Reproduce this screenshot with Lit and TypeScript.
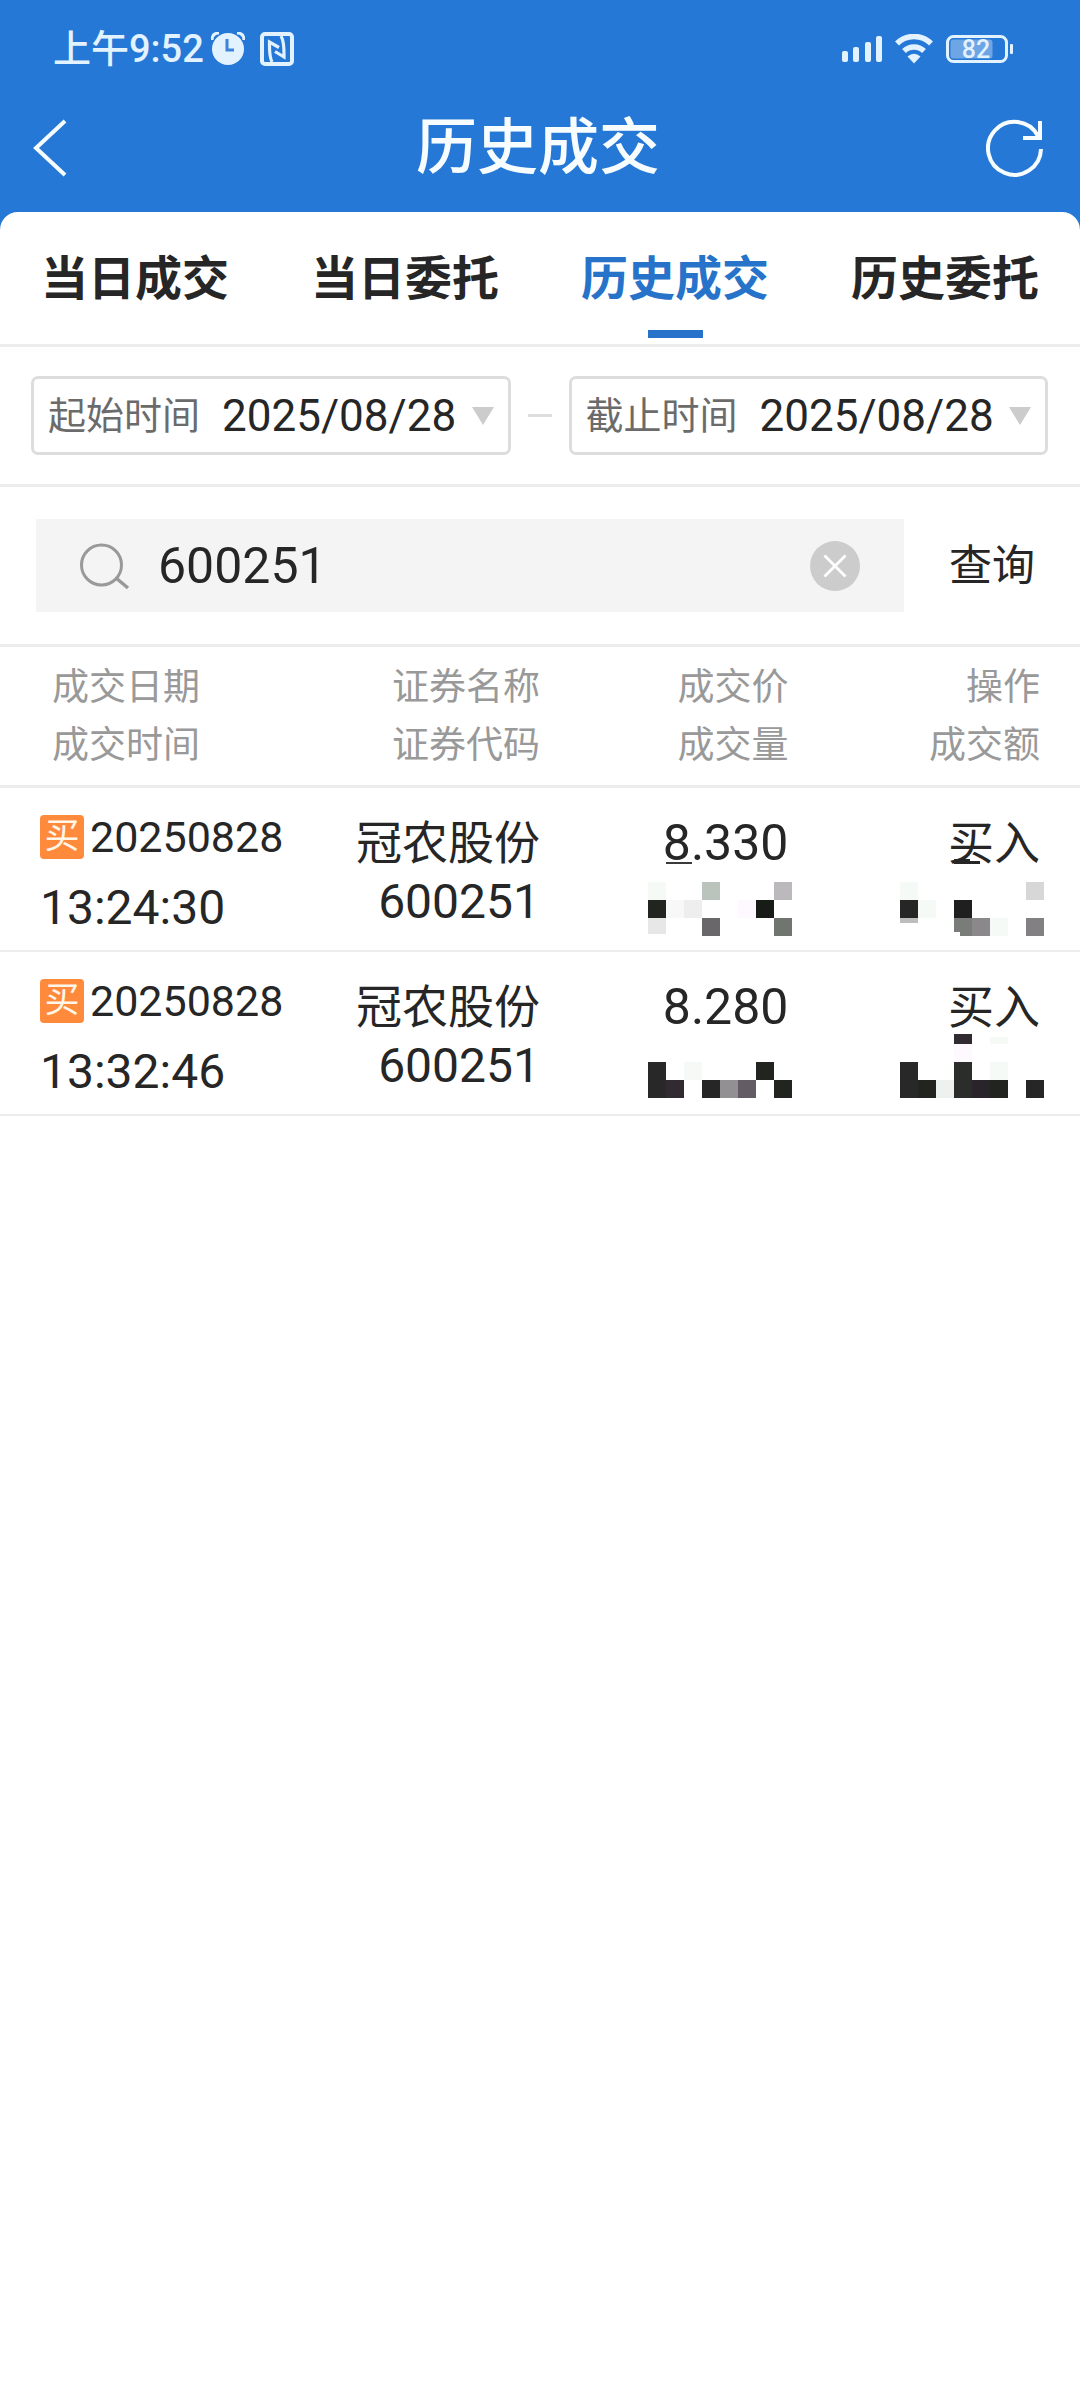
import { LitElement, html, css, svg } from "lit";
import { customElement, property, state } from "lit/decorators.js";
import { classMap } from "lit/directives/class-map.js";

/** One filled block of a masked value: x, y, width, height, colour. */
type Block = [number, number, number, number, string];

interface Trade {
  date: string;
  time: string;
  name: string;
  code: string;
  price: string;
  side: string;
  volumeMask: Block[];
  amountMask: Block[];
}

const TABS = ["当日成交", "当日委托", "历史成交", "历史委托"];

const HEADINGS: [string, string][] = [
  ["成交日期", "成交时间"],
  ["证券名称", "证券代码"],
  ["成交价", "成交量"],
  ["操作", "成交额"],
];

const TRADES: Trade[] = [
  {
    date: "20250828",
    time: "13:24:30",
    name: "冠农股份",
    code: "600251",
    price: "8.330",
    side: "买入",
    volumeMask: [
      [18, 6, 26, 2, "#3a3a3a"],
      [0, 26, 18, 18, "#f5faf7"],
      [54, 26, 18, 18, "#bbc4bc"],
      [126, 26, 18, 18, "#bcb9bd"],
      [0, 44, 18, 18, "#22251f"],
      [18, 44, 18, 18, "#f8f8f8"],
      [36, 44, 18, 18, "#eeeeee"],
      [90, 44, 18, 18, "#fdf9fe"],
      [108, 44, 18, 18, "#171c17"],
      [0, 62, 18, 16, "#e7e7e7"],
      [54, 62, 18, 18, "#69676a"],
      [126, 62, 18, 18, "#717570"],
    ],
    amountMask: [
      [54, 3, 16, 5, "#262626"],
      [70, 5, 10, 3, "#262626"],
      [0, 26, 18, 18, "#f5faf7"],
      [126, 26, 18, 18, "#d7d7d7"],
      [0, 44, 18, 18, "#262626"],
      [18, 44, 18, 18, "#f5faf7"],
      [54, 44, 18, 18, "#1f1f1f"],
      [0, 62, 18, 5, "#bdbdbd"],
      [54, 62, 18, 14, "#797c78"],
      [60, 76, 12, 4, "#797c78"],
      [72, 62, 18, 18, "#8b888c"],
      [90, 62, 18, 18, "#f5faf7"],
      [126, 62, 18, 18, "#838083"],
    ],
  },
  {
    date: "20250828",
    time: "13:32:46",
    name: "冠农股份",
    code: "600251",
    price: "8.280",
    side: "买入",
    volumeMask: [
      [0, 42, 18, 36, "#282828"],
      [36, 42, 18, 18, "#f5faf7"],
      [108, 42, 18, 18, "#21241f"],
      [18, 60, 18, 18, "#312a31"],
      [54, 60, 18, 18, "#262626"],
      [72, 60, 18, 18, "#929093"],
      [90, 60, 18, 18, "#645c64"],
      [126, 60, 18, 18, "#21241f"],
    ],
    amountMask: [
      [54, 14, 18, 10, "#312a31"],
      [90, 17, 18, 7, "#f5faf7"],
      [54, 24, 18, 18, "#fdf9fe"],
      [0, 42, 18, 36, "#282828"],
      [54, 42, 18, 36, "#2a2d29"],
      [90, 42, 18, 18, "#f5faf7"],
      [18, 60, 18, 18, "#21241f"],
      [36, 60, 18, 18, "#edf2ee"],
      [72, 60, 18, 18, "#29232a"],
      [90, 60, 18, 18, "#21241f"],
      [126, 60, 18, 18, "#262626"],
    ],
  },
];

const FONT = css`Roboto, "Noto Sans CJK SC", sans-serif`;

@customElement("status-bar")
class StatusBar extends LitElement {
  static styles = css`
    :host {
      display: flex;
      align-items: center;
      justify-content: space-between;
      padding: 25px 67px 23px 53px;
      color: #e2f2ff;
      font-family: ${FONT};
    }
    .group {
      display: flex;
      align-items: center;
    }
    .clock {
      font-size: 38px;
      line-height: 48px;
      font-weight: 500;
      margin-right: 7px;
    }
    .nfc {
      margin-left: 15px;
    }
    .right {
      gap: 13px;
    }
    svg {
      display: block;
    }
    .level {
      font-size: 25px;
      font-weight: 500;
    }
  `;

  render() {
    return html`
      <div class="group">
        <span class="clock">上午9:52</span>
        <svg width="34" height="34" viewBox="0 0 34 34" aria-hidden="true">
          <circle cx="17" cy="17" r="16" fill="currentColor" />
          <path d="M1 8Q1 1 8 1M26 1Q33 1 33 8" fill="none" stroke="currentColor" stroke-width="3" />
          <path d="M16 7V18H23" fill="none" stroke="#3d83d8" stroke-width="3" />
        </svg>
        <svg class="nfc" width="34" height="34" viewBox="0 0 34 34" fill="none" stroke="currentColor" aria-hidden="true">
          <rect x="2" y="2" width="30" height="30" rx="3" stroke-width="4" />
          <path d="M12 30C9 24 9.5 17 9.5 10L19 15.500M21 4C24.500 10 24 18 24 25L15 19.500" stroke-width="3.2" />
        </svg>
      </div>
      <div class="group right">
        <svg width="40" height="28" viewBox="0 0 40 28" fill="currentColor" aria-hidden="true">
          <rect x="0" y="16" width="6" height="11" rx="2" />
          <rect x="11" y="12" width="6" height="15" rx="2" />
          <rect x="23" y="7" width="6" height="20" rx="2" />
          <rect x="34" y="1" width="6" height="26" rx="2" />
        </svg>
        <svg width="38" height="30" viewBox="0 0 38 30" aria-hidden="true">
          <path d="M2 9.500A24 24 0 0 1 36 9.500M9 17A14.500 14.500 0 0 1 29 17" fill="none" stroke="currentColor" stroke-width="5.500" />
          <path d="M12.500 22.500Q19 17 25.500 22.500L19 29.500Z" fill="currentColor" />
        </svg>
        <svg width="67" height="28" viewBox="0 0 67 28" aria-hidden="true">
          <rect x="1.500" y="1.500" width="59" height="25" rx="6" fill="none" stroke="currentColor" stroke-width="3" />
          <rect x="4.500" y="4.500" width="42" height="19" rx="3" fill="#6ea5e5" />
          <rect x="64" y="9" width="3" height="10" rx="1" fill="currentColor" />
          <text class="level" x="30" y="23" text-anchor="middle" fill="currentColor">82</text>
        </svg>
      </div>
    `;
  }
}

@customElement("masked-value")
class MaskedValue extends LitElement {
  @property({ attribute: false }) blocks: Block[] = [];

  static styles = css`
    :host,
    .mask {
      display: block;
    }
  `;

  render() {
    return html`
      <svg class="mask" width="144" height="80" viewBox="0 0 144 80" shape-rendering="crispEdges" aria-hidden="true">
        ${this.blocks.map(
          ([x, y, w, h, fill]) => svg`<rect x=${x} y=${y} width=${w} height=${h} fill=${fill}></rect>`
        )}
      </svg>
    `;
  }
}

@customElement("date-field")
class DateField extends LitElement {
  @property() label = "";
  @property() value = "";

  static styles = css`
    :host {
      display: flex;
      flex: 1;
      align-items: center;
      min-width: 0;
      box-sizing: border-box;
      padding: 13px 14px 12px 14px;
      border: 3px solid #dddddd;
      border-radius: 7px;
      font-family: ${FONT};
    }
    .label {
      flex: none;
      margin-right: 22px;
      font-size: 38px;
      line-height: 48px;
      color: #6b6b6b;
    }
    .value {
      flex: 1;
      min-width: 0;
      height: 48px;
      margin: 0;
      padding: 0;
      border: 0;
      appearance: none;
      background: none;
      color: #262626;
      font-family: inherit;
      font-size: 44px;
      line-height: 48px;
    }
    .arrow {
      flex: none;
      pointer-events: none;
    }
  `;

  render() {
    return html`
      <label class="label" for="date">${this.label}</label>
      <select class="value" id="date">
        <option selected>${this.value}</option>
      </select>
      <svg class="arrow" width="22" height="18" viewBox="0 0 22 18" aria-hidden="true">
        <path d="M0 0H22L11 18Z" fill="#cccccc" />
      </svg>
    `;
  }
}

@customElement("app-root")
class AppRoot extends LitElement {
  @state() private activeTab = 2;
  @state() private query = "600251";

  static styles = css`
    :host {
      display: flex;
      flex-direction: column;
      min-height: 100vh;
      background: #2678d6;
      color: #262626;
      font-family: ${FONT};
    }
    svg {
      display: block;
    }
    button {
      margin: 0;
      padding: 0;
      border: 0;
      background: none;
      color: inherit;
      font-family: inherit;
      cursor: pointer;
    }
    .nav {
      display: grid;
      grid-template-columns: 1fr auto 1fr;
      align-items: center;
      padding: 16px 36px 28px 32px;
      color: #f7fdff;
    }
    .back {
      justify-self: start;
    }
    .refresh {
      justify-self: end;
    }
    .title {
      margin: 0;
      font-size: 61px;
      line-height: 72px;
      font-weight: 500;
    }
    .sheet {
      flex: 1;
      border-radius: 18px 18px 0 0;
      background: #ffffff;
    }
    .tabs {
      display: grid;
      grid-template-columns: repeat(4, 1fr);
      border-bottom: 3px solid #ededed;
    }
    .tab {
      display: flex;
      flex-direction: column;
      align-items: center;
      gap: 21px;
      padding: 37px 0 6px;
      font-size: 47px;
      line-height: 60px;
      font-weight: 700;
    }
    .tab::after {
      content: "";
      width: 55px;
      height: 8px;
    }
    .tab.active {
      color: #2673c9;
    }
    .tab.active::after {
      background: #2673c9;
    }
    .range {
      display: flex;
      align-items: center;
      gap: 17px;
      padding: 29px 32px 29px 31px;
      border-bottom: 3px solid #ededed;
    }
    .dash {
      width: 24px;
      height: 3px;
      background: #dddddd;
    }
    .search {
      display: flex;
      padding: 32px 0 32px 36px;
      border-bottom: 3px solid #ededed;
    }
    .box {
      display: flex;
      flex: 1;
      align-items: center;
      min-width: 0;
      padding: 0 44px;
      background: #f4f4f4;
    }
    .query {
      flex: 1;
      min-width: 0;
      height: 93px;
      margin: 0 28px;
      padding: 0;
      border: 0;
      outline: 0;
      background: none;
      color: inherit;
      font-family: inherit;
      font-size: 50px;
    }
    .submit {
      width: 176px;
      font-size: 43px;
      line-height: 48px;
    }
    .trades {
      width: 100%;
      table-layout: fixed;
      border-collapse: separate;
      border-spacing: 0;
      font-size: 48px;
      line-height: 48px;
    }
    .date-col {
      width: 30%;
    }
    .name-col {
      width: 20%;
    }
    .price-col {
      width: 23%;
    }
    th {
      padding: 12px 0 10px;
      border-bottom: 3px solid #ededed;
      color: #999999;
      font-size: 37px;
      line-height: 58px;
      font-weight: 400;
      text-align: right;
    }
    th:first-child {
      padding-left: 52px;
      text-align: left;
    }
    th:last-child,
    td:last-child {
      padding-right: 40px;
    }
    .line {
      display: block;
    }
    td {
      height: 162px;
      padding: 0;
      border-bottom: 2px solid #ededed;
      vertical-align: top;
      text-align: right;
    }
    .cell {
      display: flex;
      flex-direction: column;
      gap: 11px;
      padding-top: 31px;
    }
    .when {
      gap: 23px;
      padding: 25px 0 0 40px;
      text-align: left;
    }
    .day {
      display: flex;
      align-items: center;
      gap: 6px;
      font-size: 43px;
    }
    .badge {
      width: 44px;
      border-radius: 4px;
      background: #ff8a3c;
      color: #fff6e8;
      font-size: 35px;
      line-height: 44px;
      text-align: center;
    }
    .price {
      font-size: 50px;
    }
    .han {
      font-size: 46px;
    }
    .masked {
      position: relative;
    }
    .mask {
      position: absolute;
      top: 68px;
      right: -4px;
    }
  `;

  private onInput(e: Event) {
    this.query = (e.target as HTMLInputElement).value;
  }

  render() {
    return html`
      <status-bar></status-bar>
      <header class="nav">
        <button class="back" aria-label="返回">
          <svg width="36" height="58" viewBox="0 0 36 58" fill="none" stroke="currentColor" stroke-width="4">
            <path d="M33 2L4 29L33 56" />
          </svg>
        </button>
        <h1 class="title">历史成交</h1>
        <button class="refresh" aria-label="刷新">
          <svg width="58" height="58" viewBox="0 0 58 58" fill="none" stroke="currentColor" stroke-width="4">
            <path d="M55 30A26.500 26.500 0 1 1 52 17" />
            <path d="M54 2V19H37" />
          </svg>
        </button>
      </header>
      <main class="sheet">
        <nav class="tabs">
          ${TABS.map(
            (tab, i) => html`
              <button
                class=${classMap({ tab: true, active: i === this.activeTab })}
                @click=${() => (this.activeTab = i)}
              >${tab}</button>
            `
          )}
        </nav>
        <section class="range">
          <date-field label="起始时间" value="2025/08/28"></date-field>
          <span class="dash"></span>
          <date-field label="截止时间" value="2025/08/28"></date-field>
        </section>
        <form class="search" @submit=${(e: Event) => e.preventDefault()}>
          <div class="box">
            <label for="query" aria-label="证券代码">
              <svg width="50" height="50" viewBox="0 0 50 50" fill="none" stroke="#999999" stroke-width="3">
                <circle cx="21.500" cy="24" r="20" />
                <path d="M36 37L48 47" stroke-width="3.500" />
              </svg>
            </label>
            <input class="query" id="query" type="text" .value=${this.query} @input=${this.onInput} />
            <button type="button" aria-label="清除" @click=${() => (this.query = "")}>
              <svg width="50" height="50" viewBox="0 0 50 50">
                <circle cx="25" cy="25" r="25" fill="#cccccc" />
                <path d="M14.500 14.500L35.500 35.500M35.500 14.500L14.500 35.500" stroke="#ffffff" stroke-width="2.800" />
              </svg>
            </button>
          </div>
          <button class="submit">查询</button>
        </form>
        <table class="trades">
          <colgroup>
            <col class="date-col" />
            <col class="name-col" />
            <col class="price-col" />
            <col />
          </colgroup>
          <thead>
            <tr>
              ${HEADINGS.map(
                ([top, bottom]) => html`
                  <th scope="col"><span class="line">${top}</span><span class="line">${bottom}</span></th>
                `
              )}
            </tr>
          </thead>
          <tbody>
            ${TRADES.map(
              (t) => html`
                <tr>
                  <td>
                    <div class="cell when">
                      <span class="day"><span class="badge">买</span>${t.date}</span>
                      <span>${t.time}</span>
                    </div>
                  </td>
                  <td>
                    <div class="cell"><span class="han">${t.name}</span><span>${t.code}</span></div>
                  </td>
                  <td>
                    <div class="cell masked">
                      <span class="price">${t.price}</span>
                      <masked-value class="mask" .blocks=${t.volumeMask}></masked-value>
                    </div>
                  </td>
                  <td>
                    <div class="cell masked">
                      <span class="han">${t.side}</span>
                      <masked-value class="mask" .blocks=${t.amountMask}></masked-value>
                    </div>
                  </td>
                </tr>
              `
            )}
          </tbody>
        </table>
      </main>
    `;
  }
}
